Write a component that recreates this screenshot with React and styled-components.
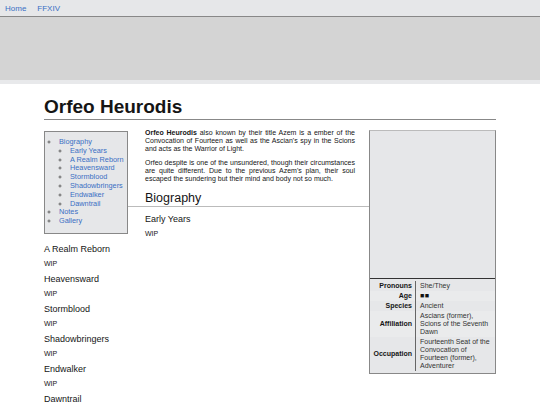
import React from "react";
import styled, { createGlobalStyle } from "styled-components";

const GlobalStyle = createGlobalStyle`
  html, body {
    margin: 0;
    padding: 0;
    background: #fff;
    font-family: "Liberation Sans", Arial, sans-serif;
    color: #151515;
  }
`;

const NavBar = styled.nav`
  height: 16px;
  background: #e6e7e9;
  border-bottom: 1px solid #888;
  display: flex;
  align-items: center;
  padding: 0 5px;
  gap: 11px;
`;

const NavLink = styled.a`
  font-size: 8px;
  color: #3a6fc4;
  text-decoration: none;
`;

const Banner = styled.div`
  height: 63px;
  background: #d4d4d4;
  border-bottom: 4px solid #e8e9eb;
`;

const Main = styled.main`
  width: 452px;
  margin: 0 auto;
`;

const Title = styled.h1`
  font-size: 19px;
  line-height: 23px;
  font-weight: bold;
  margin: 11px 0 0;
  padding-bottom: 1px;
  border-bottom: 1px solid #888;
`;

const Body = styled.div`
  padding-top: 9px;
`;

const Infobox = styled.aside`
  float: right;
  width: 125px;
  margin: 1px 0 6px 14px;
  background: #e6e7e9;
  border: 1px solid #888;
  border-top-color: #bbb;
`;

const ImageArea = styled.div`
  height: 147px;
  border-bottom: 1px solid #333;
`;

const InfoTable = styled.table`
  width: 100%;
  border-collapse: collapse;
  margin: 2px 0;
  font-size: 7px;
  line-height: 8px;
`;

const InfoRow = styled.tr`
  background: ${(p) => (p.$alt ? "#eaebec" : "#e6e7e9")};
`;

const InfoLabel = styled.th`
  text-align: right;
  font-weight: bold;
  padding: 1px 3px 1px 2px;
  width: 40px;
  border-right: 1px solid #666;
  vertical-align: middle;
`;

const InfoValue = styled.td`
  padding: 1px 2px 1px 4px;
  color: #333;
  vertical-align: middle;
`;

const Redacted = styled.span`
  font-size: 7px;
  letter-spacing: 0.5px;
  color: #111;
`;

const Toc = styled.nav`
  float: left;
  width: 82px;
  margin: 2px 17px 8px 0;
  background: #e6e7e9;
  border: 1px solid #888;
  padding: 6px 0 7px;
`;

const TocList = styled.ul`
  margin: 0;
  padding-left: ${(p) => (p.$nested ? "11px" : "14px")};
  list-style: circle;
  font-size: 7.3px;
  line-height: 8.8px;
  color: #666;
`;

const TocLink = styled.a`
  color: #3a6fc4;
  text-decoration: none;
`;

const Para = styled.p`
  font-size: 7px;
  line-height: 8px;
  margin: 0 0 6px;
  text-align: justify;
`;

const SectionTitle = styled.h2`
  font-size: 12.5px;
  line-height: 14px;
  font-weight: normal;
  margin: 8px 0 7px;
  padding-bottom: 1px;
  border-bottom: 1px solid #bbb;
`;

const SubTitle = styled.h3`
  font-size: 9px;
  line-height: 10.5px;
  font-weight: normal;
  margin: 0 0 5.5px;
`;

const info = [
  ["Pronouns", "She/They"],
  ["Age", <Redacted key="r">■■</Redacted>],
  ["Species", "Ancient"],
  ["Affiliation", "Ascians (former), Scions of the Seventh Dawn"],
  ["Occupation", "Fourteenth Seat of the Convocation of Fourteen (former), Adventurer"],
];

const eras = [
  "Early Years",
  "A Realm Reborn",
  "Heavensward",
  "Stormblood",
  "Shadowbringers",
  "Endwalker",
  "Dawntrail",
];

const App = () => (
  <>
    <GlobalStyle />
    <NavBar>
      <NavLink href="#">Home</NavLink>
      <NavLink href="#">FFXIV</NavLink>
    </NavBar>
    <Banner />
    <Main>
      <Title>Orfeo Heurodis</Title>
      <Body>
        <Infobox>
          <ImageArea />
          <InfoTable>
            <tbody>
              {info.map(([label, value], i) => (
                <InfoRow key={label} $alt={i % 2 === 1}>
                  <InfoLabel>{label}</InfoLabel>
                  <InfoValue>{value}</InfoValue>
                </InfoRow>
              ))}
            </tbody>
          </InfoTable>
        </Infobox>
        <Toc>
          <TocList>
            <li>
              <TocLink href="#">Biography</TocLink>
              <TocList $nested>
                {eras.map((e) => (
                  <li key={e}>
                    <TocLink href="#">{e}</TocLink>
                  </li>
                ))}
              </TocList>
            </li>
            <li>
              <TocLink href="#">Notes</TocLink>
            </li>
            <li>
              <TocLink href="#">Gallery</TocLink>
            </li>
          </TocList>
        </Toc>
        <Para>
          <b>Orfeo Heurodis</b> also known by their title Azem is a ember of the
          Convocation of Fourteen as well as the Ascian's spy in the Scions and
          acts as the Warrior of Light.
        </Para>
        <Para>
          Orfeo despite is one of the unsundered, though their circumstances are
          quite different. Due to the previous Azem's plan, their soul escaped
          the sundering but their mind and body not so much.
        </Para>
        <SectionTitle>Biography</SectionTitle>
        {eras.map((e) => (
          <React.Fragment key={e}>
            <SubTitle>{e}</SubTitle>
            <Para>WIP</Para>
          </React.Fragment>
        ))}
      </Body>
    </Main>
  </>
);

export default App;
